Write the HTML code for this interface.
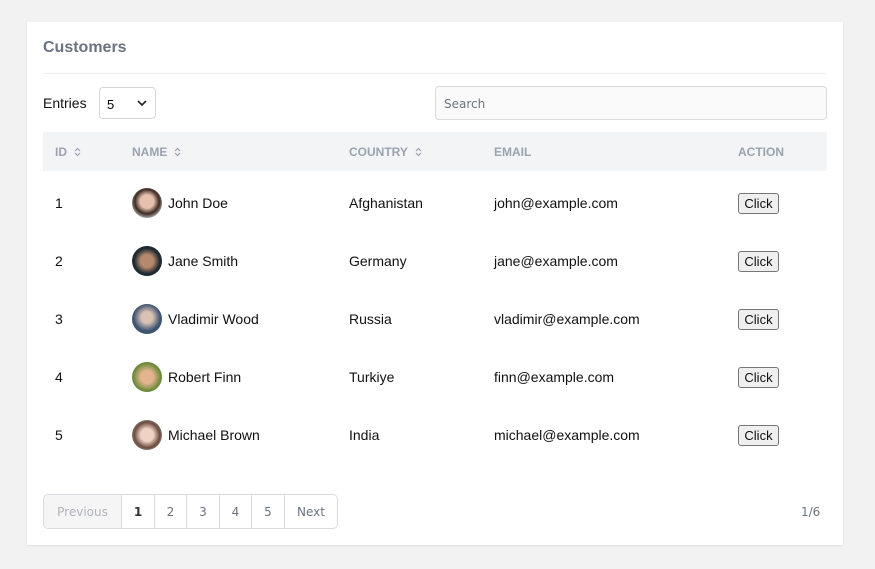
<!DOCTYPE html>
<html><head><style>
body{margin:0;background:#f2f2f2;font-family:"Liberation Sans",Arial,sans-serif;width:875px;height:569px;overflow:hidden}
.card{position:absolute;left:27px;top:22px;width:816px;height:523px;background:#fff;box-shadow:0 1px 2px rgba(0,0,0,.08)}
.title{position:absolute;left:16px;top:17px;font-size:16px;font-weight:bold;color:#6b7280}
.hr{position:absolute;left:16px;right:16px;top:51px;border-top:1px solid #eef0f2}
.ent{position:absolute;left:16px;top:73px;font-size:14px;color:#111}
.sel{position:absolute;left:72px;top:65px;width:57px;height:32px;border:1px solid #d5d7da;border-radius:4px;box-sizing:border-box;font-size:13px;padding:9px 0 0 7px}
.sel svg{position:absolute;right:8px;top:12px}
.search{position:absolute;left:408px;top:64px;width:392px;height:34px;border:1px solid #d8dadd;border-radius:4px;box-sizing:border-box;color:#6b7280;padding:10px 8px;background:#fafafa;font-family:"DejaVu Sans",sans-serif;font-size:12px}
.th{position:absolute;left:16px;top:110px;width:784px;height:39px;background:#f3f4f6}
.h{position:absolute;top:123px;font-size:12px;font-weight:bold;color:#9ca3af}
.h svg{vertical-align:-1px;margin-left:7px}
.row{position:absolute;left:16px;width:784px;height:58px;font-size:14px;color:#111}
.row span{position:absolute;top:22px}
.av{position:absolute;left:89px;top:15px;width:30px;height:30px;border-radius:50%}
.btn{position:absolute;left:695px;top:20px;width:41px;height:21px;border:1px solid #767676;border-radius:3px;background:#efefef;box-sizing:border-box;font-size:13px;text-align:center;line-height:19px}
.pg{position:absolute;left:16px;top:472px;height:35px;display:flex;border:1px solid #d8dbe0;border-radius:5px;font-family:"DejaVu Sans",sans-serif;font-size:12px;color:#6b7280;overflow:hidden;box-sizing:border-box}
.pg div{border-left:1px solid #d8dbe0;display:flex;align-items:center;justify-content:center;box-sizing:border-box}
.pg div:first-child{border-left:0}
.pn{position:absolute;left:774px;top:483px;font-family:"DejaVu Sans",sans-serif;font-size:12px;color:#6b7280}
</style></head><body>
<div class="card">
<div class="title">Customers</div>
<div class="hr"></div>
<div class="ent">Entries</div>
<div class="sel">5<svg width="10" height="7" viewBox="0 0 10 7"><path d="M1 1l4 4 4-4" stroke="#222" stroke-width="1.6" fill="none"/></svg></div>
<div class="search">Search</div>
<div class="th"></div>
<div class="h" style="left:28px">ID<svg width="7" height="10" viewBox="0 0 7 10"><path d="M1 4l2.5-2.5L6 4M1 6l2.5 2.5L6 6" stroke="#9ca3af" stroke-width="1.2" fill="none"/></svg></div>
<div class="h" style="left:105px">NAME<svg width="7" height="10" viewBox="0 0 7 10"><path d="M1 4l2.5-2.5L6 4M1 6l2.5 2.5L6 6" stroke="#9ca3af" stroke-width="1.2" fill="none"/></svg></div>
<div class="h" style="left:322px">COUNTRY<svg width="7" height="10" viewBox="0 0 7 10"><path d="M1 4l2.5-2.5L6 4M1 6l2.5 2.5L6 6" stroke="#9ca3af" stroke-width="1.2" fill="none"/></svg></div>
<div class="h" style="left:467px">EMAIL</div>
<div class="h" style="left:711px">ACTION</div>

<div class="row" style="top:151px"><span style="left:12px">1</span><div class="av" style="background:radial-gradient(circle at 50% 45%,#e6c1ad 30%,#3b2a22 55%,#ccc 80%)"></div><span style="left:125px">John Doe</span><span style="left:306px">Afghanistan</span><span style="left:451px">john@example.com</span><div class="btn">Click</div></div>
<div class="row" style="top:209px"><span style="left:12px">2</span><div class="av" style="background:radial-gradient(circle at 50% 50%,#b58a6c 30%,#1f2a33 60%)"></div><span style="left:125px">Jane Smith</span><span style="left:306px">Germany</span><span style="left:451px">jane@example.com</span><div class="btn">Click</div></div>
<div class="row" style="top:267px"><span style="left:12px">3</span><div class="av" style="background:radial-gradient(circle at 50% 45%,#d9c3b5 25%,#3d5470 60%)"></div><span style="left:125px">Vladimir Wood</span><span style="left:306px">Russia</span><span style="left:451px">vladimir@example.com</span><div class="btn">Click</div></div>
<div class="row" style="top:325px"><span style="left:12px">4</span><div class="av" style="background:radial-gradient(circle at 50% 50%,#e3b48e 30%,#6c8a3a 65%)"></div><span style="left:125px">Robert Finn</span><span style="left:306px">Turkiye</span><span style="left:451px">finn@example.com</span><div class="btn">Click</div></div>
<div class="row" style="top:383px"><span style="left:12px">5</span><div class="av" style="background:radial-gradient(circle at 50% 50%,#efd2c3 30%,#6b4b3e 60%,#aaa 85%)"></div><span style="left:125px">Michael Brown</span><span style="left:306px">India</span><span style="left:451px">michael@example.com</span><div class="btn">Click</div></div>

<div class="pg">
<div style="width:77px;background:#f5f5f5;color:#b0b3b8">Previous</div>
<div style="width:33px;color:#333;font-weight:bold">1</div>
<div style="width:32px">2</div>
<div style="width:33px">3</div>
<div style="width:32px">4</div>
<div style="width:33px">5</div>
<div style="width:53px">Next</div>
</div>
<div class="pn">1/6</div>
</div>
</body></html>
